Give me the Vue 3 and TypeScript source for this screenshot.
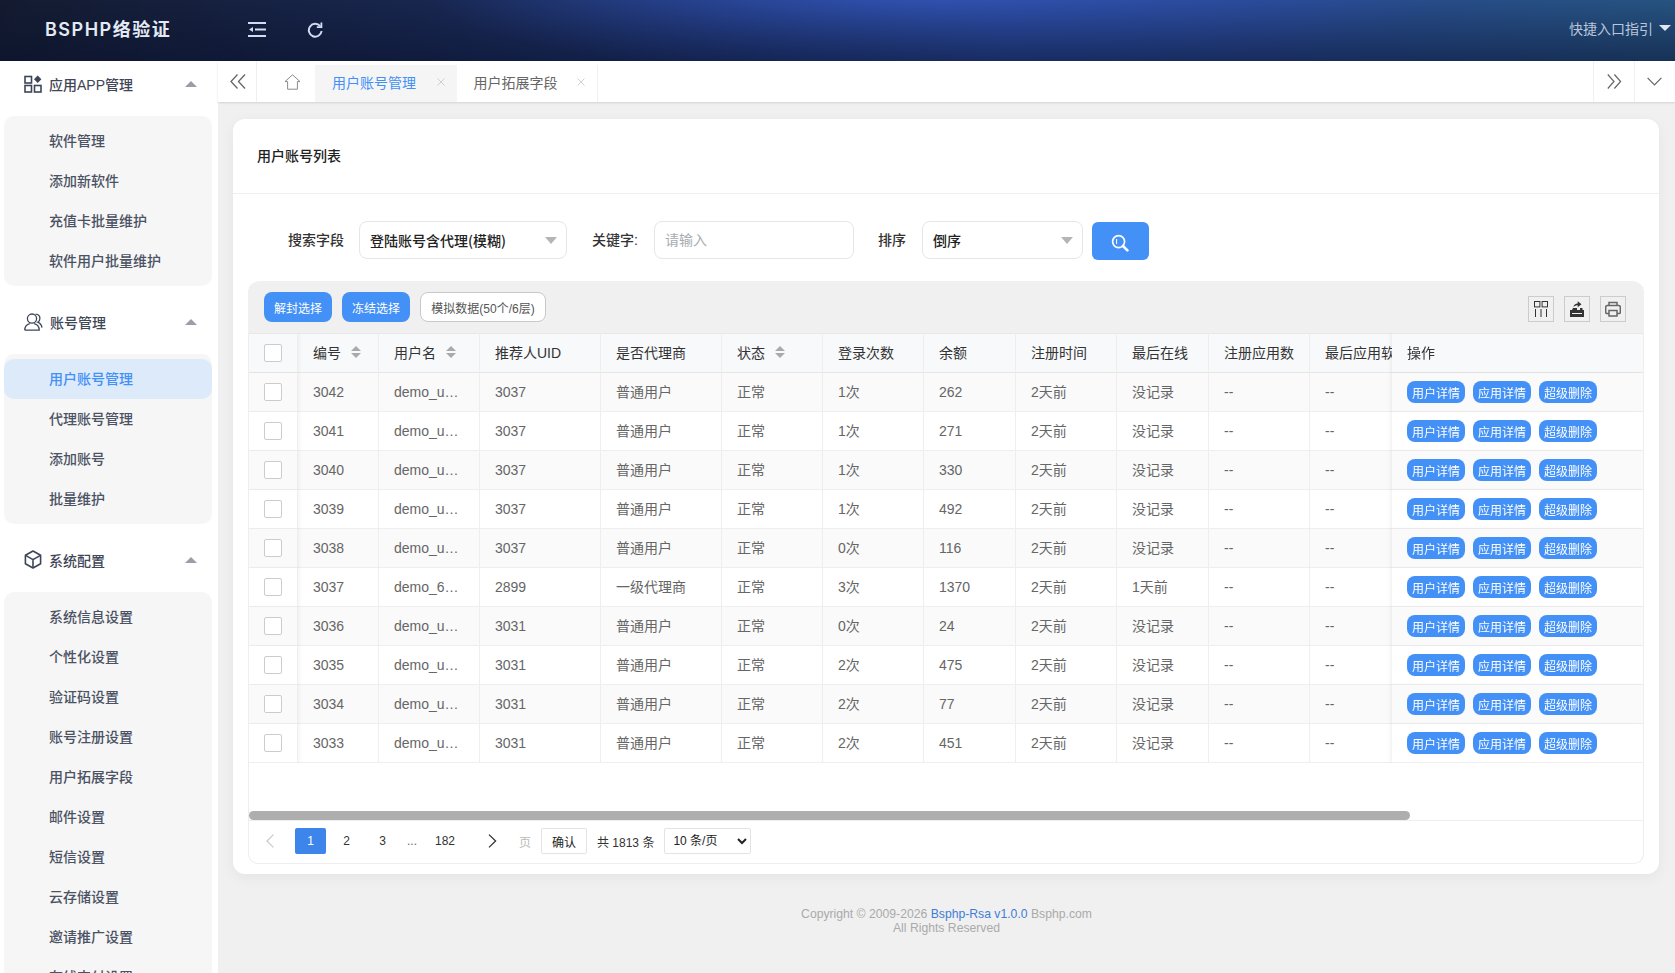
<script setup lang="ts">
interface Row {
  id: number
  name: string
  uid: number
  role: string
  logins: number
  balance: number
  online: string
}

const groups = [
  { title: '应用APP管理', icon: 'apps', items: ['软件管理', '添加新软件', '充值卡批量维护', '软件用户批量维护'] },
  { title: '账号管理', icon: 'user', items: ['用户账号管理', '代理账号管理', '添加账号', '批量维护'] },
  {
    title: '系统配置',
    icon: 'cube',
    items: ['系统信息设置', '个性化设置', '验证码设置', '账号注册设置', '用户拓展字段', '邮件设置', '短信设置', '云存储设置', '邀请推广设置', '在线支付设置'],
  },
]

const activeItem = '用户账号管理'

const columns = [
  { title: '编号', sort: true },
  { title: '用户名', sort: true },
  { title: '推荐人UID' },
  { title: '是否代理商' },
  { title: '状态', sort: true },
  { title: '登录次数' },
  { title: '余额' },
  { title: '注册时间' },
  { title: '最后在线' },
  { title: '注册应用数' },
  { title: '最后应用软件' },
]

const colWidths = [49, 81, 101, 121, 121, 101, 101, 92, 101, 92, 101, 363, 251]

const rows: Row[] = [
  { id: 3042, name: 'demo_u…', uid: 3037, role: '普通用户', logins: 1, balance: 262, online: '没记录' },
  { id: 3041, name: 'demo_u…', uid: 3037, role: '普通用户', logins: 1, balance: 271, online: '没记录' },
  { id: 3040, name: 'demo_u…', uid: 3037, role: '普通用户', logins: 1, balance: 330, online: '没记录' },
  { id: 3039, name: 'demo_u…', uid: 3037, role: '普通用户', logins: 1, balance: 492, online: '没记录' },
  { id: 3038, name: 'demo_u…', uid: 3037, role: '普通用户', logins: 0, balance: 116, online: '没记录' },
  { id: 3037, name: 'demo_6…', uid: 2899, role: '一级代理商', logins: 3, balance: 1370, online: '1天前' },
  { id: 3036, name: 'demo_u…', uid: 3031, role: '普通用户', logins: 0, balance: 24, online: '没记录' },
  { id: 3035, name: 'demo_u…', uid: 3031, role: '普通用户', logins: 2, balance: 475, online: '没记录' },
  { id: 3034, name: 'demo_u…', uid: 3031, role: '普通用户', logins: 2, balance: 77, online: '没记录' },
  { id: 3033, name: 'demo_u…', uid: 3031, role: '普通用户', logins: 2, balance: 451, online: '没记录' },
]
</script>

<template>
  <div class="app">
    <header class="topbar">
      <div class="logo">BSPHP络验证</div>
      <svg class="top-icon" width="18" height="15" viewBox="0 0 18 15" fill="none" stroke="#cfdcf2" stroke-width="2">
        <path d="M0 1h18M7 7.5h11M0 14h18" />
        <path d="M1 7.5l4-2.6v5.2z" fill="#cfdcf2" stroke="none" />
      </svg>
      <svg class="top-icon refresh" width="17" height="16" viewBox="0 0 17 16" fill="none" stroke="#cfdcf2" stroke-width="2">
        <path d="M13.2 4.2A6.4 6.4 0 1 0 14.6 9" />
        <path d="M14.4 .6v4.6H9.8" stroke-width="1.8" />
      </svg>
      <div class="quick">快捷入口指引<i class="caret-down"></i></div>
    </header>

    <div class="body">
      <aside class="sidebar">
        <section v-for="g in groups" :key="g.title" class="group">
          <div class="group-head">
            <svg v-if="g.icon === 'apps'" width="18" height="18" viewBox="0 0 18 18" fill="none" stroke="#3d4659" stroke-width="1.6">
              <rect x="1" y="1.5" width="6.5" height="6.5" />
              <rect x="1" y="10.5" width="6.5" height="6.5" />
              <rect x="10.5" y="10.5" width="6.5" height="6.5" />
              <path d="M13.7 .6l3.7 3.7-3.7 3.7L10 4.3z" fill="#3d4659" stroke="none" />
            </svg>
            <svg v-else-if="g.icon === 'user'" width="19" height="18" viewBox="0 0 19 18" fill="none" stroke="#3d4659" stroke-width="1.3">
              <circle cx="8" cy="5.6" r="4.6" />
              <path d="M.8 17.2c0-3.6 2.4-6 5-6.6M10.2 10.6c2.6.6 5 3 5 6.6H.8" />
              <path d="M11.5 1.2c2.8.2 4.4 2 4.4 4.2 0 1.6-.8 3-2.2 3.8 2.4 1 3.9 3 4.3 5.4" />
            </svg>
            <svg v-else width="18" height="19" viewBox="0 0 18 19" fill="none" stroke="#3d4659" stroke-width="1.6" stroke-linejoin="round">
              <path d="M9 1l7.6 4.3v8.4L9 18l-7.6-4.3V5.3z" />
              <path d="M1.6 5.4L9 9.6l7.4-4.2M9 9.6V18" />
            </svg>
            <span class="group-title">{{ g.title }}</span>
            <i class="caret-up"></i>
          </div>
          <ul class="sub">
            <li v-for="item in g.items" :key="item" :class="{ active: item === activeItem }">{{ item }}</li>
          </ul>
        </section>
      </aside>

      <main class="main">
        <nav class="tabbar">
          <button class="tb-btn collapse">
            <svg width="16" height="15" viewBox="0 0 16 15" fill="none" stroke="#666" stroke-width="1.3">
              <path d="M7.5 .5L1 7.5l6.5 7M15 .5L8.5 7.5l6.5 7" />
            </svg>
          </button>
          <button class="tb-btn home">
            <svg width="17" height="16" viewBox="0 0 17 16" fill="none" stroke="#8a8a8a" stroke-width="1">
              <path d="M8.5 .8L16 7.6h-2.6v7.6H3.6V7.6H1z" stroke-linejoin="round" />
            </svg>
          </button>
          <div class="tab active">
            用户账号管理
            <svg class="tab-x" width="8" height="8" viewBox="0 0 8 8" stroke="#cfcfcf"><path d="M.5 .5l7 7M7.5 .5l-7 7" /></svg>
          </div>
          <div class="tab">
            用户拓展字段
            <svg class="tab-x" width="8" height="8" viewBox="0 0 8 8" stroke="#cfcfcf"><path d="M.5 .5l7 7M7.5 .5l-7 7" /></svg>
          </div>
          <button class="tb-btn next">
            <svg width="15" height="15" viewBox="0 0 15 15" fill="none" stroke="#666" stroke-width="1.2">
              <path d="M.8 .5L7 7.5l-6.2 7M7.4 .5l6.2 7-6.2 7" />
            </svg>
          </button>
          <button class="tb-btn more">
            <svg width="15" height="9" viewBox="0 0 15 9" fill="none" stroke="#666" stroke-width="1.2">
              <path d="M.6 .8L7.5 8l6.9-7.2" />
            </svg>
          </button>
        </nav>

        <div class="card">
          <div class="card-head">用户账号列表</div>

          <form class="search" @submit.prevent>
            <label class="lbl field-lbl">搜索字段</label>
            <div class="fake-select field-wide">登陆账号含代理(模糊)<i class="caret-gray"></i></div>
            <label class="lbl kw">关键字:</label>
            <input class="kw-input" placeholder="请输入" />
            <label class="lbl sort-lbl">排序</label>
            <div class="fake-select field-sort">倒序<i class="caret-gray"></i></div>
            <button class="search-btn" type="submit">
              <svg width="18" height="18" viewBox="0 0 18 18" fill="none" stroke="#fff">
                <circle cx="7.6" cy="7.6" r="6" stroke-width="1.7" />
                <path d="M12 12l4.4 4.4" stroke-width="2.6" stroke-linecap="round" />
                <path d="M5.6 5v5" stroke-width="1" />
              </svg>
            </button>
          </form>

          <div class="panel">
            <div class="toolbar">
              <button class="btn-blue">解封选择</button>
              <button class="btn-blue">冻结选择</button>
              <button class="btn-plain">模拟数据(50个/6层)</button>
              <div class="tools">
                <button class="tool">
                  <svg width="14" height="16" viewBox="0 0 14 16" fill="none" stroke="#333" stroke-width="1">
                    <rect x=".5" y=".5" width="5.4" height="5.4" />
                    <rect x="8.1" y=".5" width="5.4" height="5.4" />
                    <path d="M1.5 8v8M7 8v8M12.5 8v8" />
                  </svg>
                </button>
                <button class="tool">
                  <svg width="16" height="16" viewBox="0 0 16 16" fill="#333">
                    <path d="M1 9h14v7H1z" />
                    <path d="M3 9l1-2h4v2zM11 7h2.5v2H11z" />
                    <path d="M4.4 6.2c.3-2.4 2-3.8 4.3-3.8V.3l3.8 3-3.8 3V4.2c-1.6 0-3 .6-4.3 2z" />
                    <path d="M3 12h10v1H3z" fill="#f0f0f0" />
                  </svg>
                </button>
                <button class="tool">
                  <svg width="16" height="16" viewBox="0 0 16 16" fill="none" stroke="#666" stroke-width="1.5">
                    <path d="M4 4.5V1.5h8v3M4 12.5H1.5A1 1 0 0 1 .7 11.5V6a1.4 1.4 0 0 1 1.4-1.4h11.8A1.4 1.4 0 0 1 15.3 6v5.5a1 1 0 0 1-.8 1H12" />
                    <path d="M4 9.5h8v5.5H4z" />
                  </svg>
                </button>
              </div>
            </div>

            <div class="table-wrap">
              <table class="grid">
                <colgroup>
                  <col v-for="(w, i) in colWidths" :key="i" :width="w" />
                </colgroup>
                <thead>
                  <tr>
                    <th class="fix-left"><span class="check"></span></th>
                    <th v-for="c in columns" :key="c.title">
                      <span class="th-in">
                        {{ c.title }}
                        <span v-if="c.sort" class="sorter"><i></i><i></i></span>
                      </span>
                    </th>
                    <th class="fix-right op-head">操作</th>
                  </tr>
                </thead>
                <tbody>
                  <tr v-for="r in rows" :key="r.id">
                    <td class="fix-left"><span class="check"></span></td>
                    <td>{{ r.id }}</td>
                    <td>{{ r.name }}</td>
                    <td>{{ r.uid }}</td>
                    <td class="zh">{{ r.role }}</td>
                    <td class="zh">正常</td>
                    <td class="zh">{{ r.logins }}次</td>
                    <td>{{ r.balance }}</td>
                    <td class="zh">2天前</td>
                    <td class="zh">{{ r.online }}</td>
                    <td>--</td>
                    <td>--</td>
                    <td class="fix-right">
                      <span class="ops">
                        <button class="op">用户详情</button>
                        <button class="op">应用详情</button>
                        <button class="op">超级删除</button>
                      </span>
                    </td>
                  </tr>
                </tbody>
              </table>
            </div>

            <div class="scroll-track"><div class="scroll-thumb"></div></div>

            <div class="pager">
              <button class="pg arrow">
                <svg width="8" height="14" viewBox="0 0 8 14" fill="none" stroke="#c9c9c9" stroke-width="1.2"><path d="M7.4 .6L1 7l6.4 6.4" /></svg>
              </button>
              <button class="pg current">1</button>
              <button class="pg">2</button>
              <button class="pg">3</button>
              <span class="dots">...</span>
              <button class="pg last">182</button>
              <button class="pg arrow next-pg">
                <svg width="9" height="14" viewBox="0 0 9 14" fill="none" stroke="#333" stroke-width="1.3"><path d="M1 .6L7.6 7 1 13.4" /></svg>
              </button>
              <span class="pg-unit">页</span>
              <button class="pg-ok">确认</button>
              <span class="pg-total">共 1813 条</span>
              <select class="pg-size">
                <option>10 条/页</option>
                <option>20 条/页</option>
                <option>50 条/页</option>
              </select>
            </div>
          </div>
        </div>

        <footer class="foot">
          <div>Copyright © 2009-2026 <a class="foot-link">Bsphp-Rsa v1.0.0</a> Bsphp.com</div>
          <div>All Rights Reserved</div>
        </footer>
      </main>
    </div>
  </div>
</template>

<style>
html,
body {
  margin: 0;
  height: 100%;
  overflow: hidden;
}
</style>

<style scoped>
.app {
  height: 973px;
  display: flex;
  flex-direction: column;
  overflow: hidden;
  font-family: "Liberation Sans", "Noto Sans CJK SC", sans-serif;
  font-size: 14px;
  color: #333;
}

button {
  font-family: inherit;
  cursor: pointer;
}

/* 顶栏 */
.topbar {
  height: 61px;
  flex: none;
  display: flex;
  align-items: center;
  background:
    linear-gradient(180deg, rgba(8, 16, 40, 0) 0%, rgba(8, 16, 44, 0.5) 100%),
    radial-gradient(ellipse 30% 130% at 56% 0, rgba(48, 82, 178, 0.9), rgba(48, 82, 178, 0)),
    linear-gradient(90deg, #141b30 0%, #18264e 25%, #1f3674 45%, #284794 60%, #28488f 75%, #265380 100%);
}

.logo {
  width: 248px;
  box-sizing: border-box;
  padding: 0 0 6px 45px;
  font-family: Inter, "Noto Sans CJK SC", sans-serif;
  font-size: 18px;
  font-weight: 600;
  letter-spacing: 1.5px;
  color: #e4eaf4;
}

.top-icon {
  display: block;
  margin-bottom: 2px;
}

.refresh {
  margin-left: 41px;
}

.quick {
  margin-left: auto;
  padding: 0 4px 6px 0;
  display: flex;
  align-items: center;
  gap: 6px;
  color: #b8c6da;
}

.caret-down {
  width: 0;
  height: 0;
  border: 6px solid transparent;
  border-top: 6px solid #dfe7f3;
  border-bottom: 0;
}

.body {
  flex: 1;
  min-height: 0;
  display: flex;
}

/* 侧边栏 */
.sidebar {
  width: 218px;
  flex: none;
  overflow: hidden;
  background: #fff;
  box-sizing: border-box;
  padding-right: 6px;
}

.group {
  margin-bottom: 13.2px;
}

.group-head {
  height: 46px;
  box-sizing: border-box;
  margin-bottom: 9px;
  padding: 0 15px 1px 24px;
  display: flex;
  align-items: center;
  color: #3f4656;
  font-weight: 500;
}

.group-title {
  margin-left: 7px;
}

.caret-up {
  margin-left: auto;
  width: 0;
  height: 0;
  border: 6px solid transparent;
  border-bottom: 6px solid #9a9ea8;
  border-top: 0;
}

.sub {
  list-style: none;
  margin: 0 0 0 4px;
  padding: 5px 0;
  background: #f6f6f6;
  border-radius: 10px;
}

.sub li {
  height: 40px;
  line-height: 40px;
  padding-left: 45px;
  border-radius: 10px;
  color: #4b5263;
  font-weight: 500;
}

.sub li.active {
  background: #dceafa;
  color: #4390f7;
}

/* 主区域 */
.main {
  flex: 1;
  min-width: 0;
  display: flex;
  flex-direction: column;
  background: #f0f0f0;
}

.tabbar {
  height: 41px;
  flex: none;
  box-sizing: border-box;
  padding-right: 1px;
  display: flex;
  background: #fff;
  box-shadow: 0 1px 2px rgba(0, 0, 0, 0.12);
}

.tb-btn {
  border: 0;
  padding: 0;
  background: none;
  display: flex;
  align-items: center;
  justify-content: center;
}

.collapse {
  width: 39px;
  padding-left: 1px;
  border-right: 1px solid #f0f0f0;
}

.home {
  width: 58px;
  padding-left: 12px;
}

.tab {
  width: 141.5px;
  height: 37px;
  margin-top: 4px;
  box-sizing: border-box;
  padding: 0 12px 3px 17px;
  display: flex;
  align-items: center;
  justify-content: space-between;
  color: #666;
  border-right: 1px solid #f0f0f0;
}

.tab.active {
  background: #f5f5f5;
  color: #4390f7;
  border-right: 0;
}

.next {
  margin-left: auto;
  width: 41px;
  border-left: 1px solid #f0f0f0;
}

.more {
  width: 40px;
  border-left: 1px solid #f0f0f0;
}

/* 卡片 */
.card {
  margin: 17px 16px 0 15px;
  height: 755px;
  flex: none;
  box-sizing: border-box;
  padding-bottom: 10px;
  display: flex;
  flex-direction: column;
  background: #fff;
  border-radius: 12px;
  box-shadow: 0 4px 14px rgba(0, 0, 0, 0.05);
}

.card-head {
  height: 75px;
  flex: none;
  box-sizing: border-box;
  padding: 0 0 2px 24px;
  display: flex;
  align-items: center;
  border-bottom: 1px solid #eee;
  font-weight: 500;
  color: #222;
}

.search {
  height: 87px;
  flex: none;
  box-sizing: border-box;
  padding: 27px 0 0 55px;
  display: flex;
  align-items: flex-start;
}

.lbl {
  height: 38px;
  line-height: 38px;
  margin-right: 16px;
  font-weight: 500;
  color: #333;
}

.field-lbl {
  margin-right: 15px;
}

.kw {
  margin-left: 25px;
}

.sort-lbl {
  margin-left: 24px;
}

.fake-select {
  height: 38px;
  box-sizing: border-box;
  padding: 0 9px 0 10px;
  display: flex;
  align-items: center;
  justify-content: space-between;
  border: 1px solid #e6e6e6;
  border-radius: 8px;
  font-family: "Noto Sans CJK SC", sans-serif;
  font-weight: 500;
  color: #222;
}

.field-wide {
  width: 208px;
}

.field-sort {
  width: 161px;
}

.caret-gray {
  width: 0;
  height: 0;
  border: 6px solid transparent;
  border-top: 7px solid #b5b5b5;
  border-bottom: 0;
}

.kw-input {
  width: 200px;
  height: 38px;
  box-sizing: border-box;
  padding: 0 10px;
  border: 1px solid #e6e6e6;
  border-radius: 8px;
  font: inherit;
  outline: none;
}

.kw-input::placeholder {
  color: #a8abb2;
}

.search-btn {
  width: 57px;
  height: 38px;
  margin: 1px 0 0 9px;
  padding: 3px 0 0;
  border: 0;
  border-radius: 6px;
  background: #4390f7;
  display: flex;
  align-items: center;
  justify-content: center;
}

/* 表格面板 */
.panel {
  flex: 1;
  min-height: 0;
  margin: 0 15px;
  display: flex;
  flex-direction: column;
  border-radius: 12px 12px 10px 10px;
  border: 1px solid #eee;
  border-top: 0;
}

.toolbar {
  height: 52px;
  flex: none;
  box-sizing: border-box;
  margin: 0 -1px;
  padding: 0 18px 0 16px;
  display: flex;
  align-items: center;
  background: #f0f0f0;
  border-radius: 12px 12px 0 0;
}

.btn-blue,
.btn-plain {
  height: 30px;
  padding: 0;
  border-radius: 8px;
  font-size: 12px;
}

.btn-blue {
  width: 68px;
  margin-right: 10px;
  border: 0;
  background: #4390f7;
  color: #fff;
}

.btn-plain {
  width: 126px;
  border: 1px solid #c9c9c9;
  background: #fff;
  color: #555;
}

.tools {
  margin: 4px 0 0 auto;
  display: flex;
  gap: 10px;
}

.tool {
  width: 26px;
  height: 26px;
  padding: 0;
  border: 1px solid #ccc;
  background: none;
  display: flex;
  align-items: center;
  justify-content: center;
}

.table-wrap {
  height: 430px;
  flex: none;
  overflow: hidden;
  background: #fff;
}

.grid {
  width: 1675px;
  table-layout: fixed;
  border-collapse: separate;
  border-spacing: 0;
}

.grid th,
.grid td {
  height: 39px;
  box-sizing: border-box;
  padding: 0 14px 0 15px;
  border-right: 1px solid #eee;
  border-bottom: 1px solid #eee;
  text-align: left;
  white-space: nowrap;
  overflow: hidden;
}

.grid th {
  height: 40px;
  padding-bottom: 2px;
  background: #f8f9fb;
  font-weight: 400;
  color: #333;
  border-bottom-color: #e6e6e6;
  border-top: 1px solid #e8e8e8;
}

.grid td {
  background: #fff;
  color: #666;
}

.grid td.zh {
  padding-bottom: 2px;
}

.grid tbody tr:nth-child(odd) td {
  background: #fafafa;
}

.fix-left {
  position: sticky;
  left: 0;
  padding: 0 0 0 15px !important;
  box-shadow: 2px 0 3px rgba(0, 0, 0, 0.04);
}

.fix-right {
  position: sticky;
  right: 0;
  padding: 0 0 0 15px !important;
  border-right: 0 !important;
  box-shadow: -2px 0 3px rgba(0, 0, 0, 0.05);
}

.op-head {
  padding-bottom: 2px !important;
}

.check {
  display: block;
  width: 18px;
  height: 18px;
  box-sizing: border-box;
  border: 1px solid #ccc;
  border-radius: 2px;
  background: #fff;
}

.th-in {
  display: flex;
  align-items: center;
  gap: 10px;
}

.sorter {
  display: flex;
  flex-direction: column;
  gap: 2px;
}

.sorter i {
  display: block;
  width: 0;
  height: 0;
  border: 5px solid transparent;
  border-top: 0;
  border-bottom: 5px solid #aaa;
}

.sorter i + i {
  border-bottom: 0;
  border-top: 5px solid #aaa;
}

.ops {
  display: flex;
  gap: 8px;
}

.op {
  width: 58px;
  height: 22px;
  padding: 0;
  border: 0;
  border-radius: 8px;
  background: #4390f7;
  color: #fff;
  font-size: 12px;
}

.scroll-track {
  height: 9px;
  margin-top: 48px;
  flex: none;
}

.scroll-thumb {
  width: 83.3%;
  height: 100%;
  border-radius: 5px;
  background: #aeaeae;
}

.pager {
  flex: 1;
  display: flex;
  align-items: center;
  padding: 0 0 2px 5px;
  border-top: 1px solid #eee;
  font-size: 12px;
  color: #333;
}

.pg {
  width: 31px;
  height: 26px;
  margin-right: 5px;
  padding: 0;
  border: 0;
  border-radius: 2px;
  background: none;
  color: #333;
  font-size: 12px;
  display: flex;
  align-items: center;
  justify-content: center;
}

.arrow {
  margin-right: 10px;
}

.current {
  background: #3d85ea;
  color: #fff;
}

.dots {
  width: 18px;
  margin-right: 5px;
  text-align: center;
  color: #666;
}

.last {
  width: 38px;
  margin-right: 13px;
}

.next-pg {
  margin-right: 11px;
}

.pg-unit {
  color: #bbb;
}

.pg-ok {
  width: 46px;
  height: 26px;
  margin-left: 10px;
  padding: 0;
  border: 1px solid #e3e3e3;
  border-radius: 2px;
  background: #fff;
  color: #222;
  font-size: 12px;
}

.pg-total {
  margin-left: 10px;
}

.pg-size {
  width: 87px;
  height: 26px;
  margin-left: 10px;
  padding: 0 0 0 4px;
  border: 1px solid #e3e3e3;
  border-radius: 2px;
  background: #fff;
  font: inherit;
  color: #222;
}

/* 页脚 */
.foot {
  padding-top: 33px;
  text-align: center;
  font-size: 12.2px;
  line-height: 14px;
  color: #aaa;
}

.foot-link {
  color: #3f7cd8;
}
</style>
